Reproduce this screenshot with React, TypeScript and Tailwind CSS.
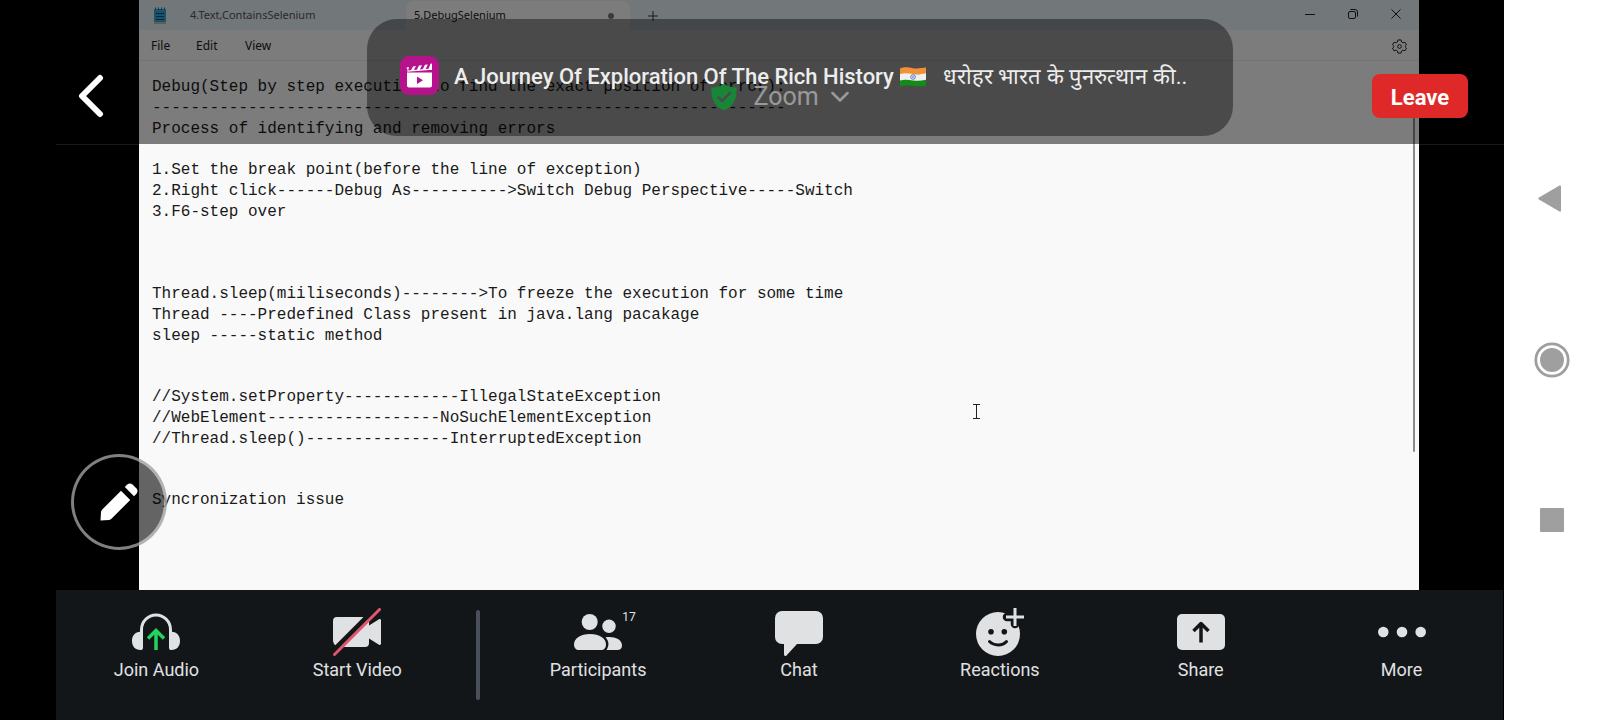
import type { ReactNode } from "react";

const noteBlocks: { gap: string; lines: string[] }[] = [
  {
    gap: "",
    lines: [
      "Debug(Step by step execution to find the exact position of error):",
      "------------------------------------------------------------------",
      "Process of identifying and removing errors",
    ],
  },
  {
    gap: "mt-5",
    lines: [
      "1.Set the break point(before the line of exception)",
      "2.Right click------Debug As---------->Switch Debug Perspective-----Switch",
      "3.F6-step over",
    ],
  },
  {
    gap: "mt-[61px]",
    lines: [
      "Thread.sleep(miiliseconds)-------->To freeze the execution for some time",
      "Thread ----Predefined Class present in java.lang pacakage",
      "sleep -----static method",
    ],
  },
  {
    gap: "mt-10",
    lines: [
      "//System.setProperty------------IllegalStateException",
      "//WebElement------------------NoSuchElementException",
      "//Thread.sleep()---------------InterruptedException",
    ],
  },
  { gap: "mt-10", lines: ["Syncronization issue"] },
];

function NotepadWindow() {
  return (
    <section
      aria-label="Shared screen"
      className="relative flex min-w-0 flex-1 flex-col bg-[#f9f9f9] text-[#1a1a1a]"
    >
      <div className="flex h-[30px] items-stretch bg-[#e4eef4] pt-px font-['Noto_Sans'] text-[11px]">
        <div className="flex w-[50px] items-center pl-[15px]">
          <svg width="12" height="18" viewBox="0 0 12 18" aria-hidden="true">
            <rect x="0" y="2" width="12" height="15" rx="1" fill="#3aa6d0" />
            <rect x="0" y="15" width="12" height="2" fill="#c9b8a8" />
            <path d="M1.5 0.5v2.5M4.5 0.5v2.5M7.5 0.5v2.5M10.5 0.5v2.5" stroke="#1d6d92" />
            <path d="M2 6.5h8M2 9.5h8M2 12.5h8" stroke="#0d4a75" />
          </svg>
        </div>
        <button type="button" className="w-[217px] truncate pl-px text-left text-[#555]">
          4.Text,ContainsSelenium
        </button>
        <div className="flex w-[224px] items-center justify-between rounded-t-lg bg-[#f9f9fb] pr-4 pl-2">
          <button type="button" className="truncate text-left">
            5.DebugSelenium
          </button>
          <span className="size-1.5 rounded-full bg-[#777]" />
        </div>
        <button type="button" aria-label="New tab" className="flex w-[45px] items-center justify-center">
          <svg width="10" height="10" viewBox="0 0 10 10" aria-hidden="true">
            <path d="M5 0v10M0 5h10" stroke="#333" />
          </svg>
        </button>
        <div className="ml-auto flex items-center gap-[33px] pr-[18px] pb-1">
          <button type="button" aria-label="Minimize">
            <svg width="10" height="10" viewBox="0 0 10 10" aria-hidden="true">
              <path d="M0 5.5h10" stroke="#222" />
            </svg>
          </button>
          <button type="button" aria-label="Restore">
            <svg width="10" height="10" viewBox="0 0 10 10" fill="none" stroke="#222" aria-hidden="true">
              <rect x="0.5" y="2.5" width="7" height="7" rx="1.5" />
              <path d="M2.5 0.5h4.5a2.5 2.5 0 0 1 2.5 2.5v4.5" />
            </svg>
          </button>
          <button type="button" aria-label="Close">
            <svg width="10" height="10" viewBox="0 0 10 10" aria-hidden="true">
              <path d="M0.5 0.5l9 9M9.5 0.5l-9 9" stroke="#222" />
            </svg>
          </button>
        </div>
      </div>

      <div className="flex h-[31px] items-center border-b border-[#e8e8e8] bg-[#f9f9fb] px-3 pt-0.5 font-['Noto_Sans'] text-xs">
        <button type="button" className="w-[45px] text-left">File</button>
        <button type="button" className="w-[49px] text-left">Edit</button>
        <button type="button" className="text-left">View</button>
        <button type="button" aria-label="Settings" className="ml-auto">
          <svg width="15" height="15" viewBox="0 0 24 24" fill="none" stroke="#222" strokeWidth="1.6" strokeLinejoin="round" aria-hidden="true">
            <path d="M9.5 1.5h5l.8 3.4 2 1.2 3.4-1 2.5 4.3-2.5 2.4v.4l2.5 2.4-2.5 4.3-3.4-1-2 1.2-.8 3.4h-5l-.8-3.4-2-1.2-3.4 1L.8 14.6l2.5-2.4v-.4L.8 9.4l2.5-4.3 3.4 1 2-1.2z" />
            <circle cx="12" cy="12" r="3" />
          </svg>
        </button>
      </div>

      <div className="pt-4 pb-4 pl-[13px] font-['Liberation_Mono',monospace] text-base leading-[21px] whitespace-pre">
        {noteBlocks.map((block) => (
          <div key={block.lines[0]} className={block.gap}>
            {block.lines.map((line) => (
              <p key={line}>{line}</p>
            ))}
          </div>
        ))}
      </div>

      <div className="absolute top-[118px] right-1 h-[334px] w-0.5 rounded-full bg-[#8a8a8a]" />
      <svg className="absolute top-[404px] left-[834px]" width="7" height="15" viewBox="0 0 7 15" fill="none" stroke="#222" aria-hidden="true">
        <path d="M0 0.5h7M0 14.5h7M3.5 1v13" />
      </svg>
    </section>
  );
}

function MeetingHeader() {
  return (
    <header className="absolute top-0 right-0 left-14 grid h-[145px] grid-cols-[1fr_auto_1fr] items-center border-b border-white/10 bg-black/50 bg-clip-padding pt-12 font-['Roboto']">
      <div className="flex pl-[22px]">
        <button type="button" aria-label="Back">
          <svg width="26" height="44" viewBox="0 0 26 44" fill="none" stroke="#fff" strokeWidth="6" strokeLinecap="round" strokeLinejoin="round" aria-hidden="true">
            <path d="M22 4L4 22l18 18" />
          </svg>
        </button>
      </div>
      <button type="button" className="flex items-center pt-0.5 text-[25px] leading-8 text-white">
        <svg width="26" height="28" viewBox="0 0 26 28" aria-hidden="true">
          <path
            fillRule="evenodd"
            fill="#2be05c"
            d="M13 0.5C16 3 20.5 4.5 25.5 4.8C26 14 24 23 13 27.5C2 23 0 14 0.5 4.8C5.5 4.5 10 3 13 0.5ZM6 14.5L11 19.8L20.5 10.2L18.8 8.5L11 16.3L7.7 12.8Z"
          />
        </svg>
        <span className="pr-3 pl-4">Zoom</span>
        <svg width="18" height="12" viewBox="0 0 18 12" fill="none" stroke="#fff" strokeWidth="2.5" strokeLinecap="round" strokeLinejoin="round" aria-hidden="true">
          <path d="M1.5 2L9 9.5L16.5 2" />
        </svg>
      </button>
      <div className="flex justify-end pr-9">
        <button type="button" className="h-11 w-24 rounded-lg bg-[#df2828] pt-0.5 text-[22px] font-bold text-white">
          Leave
        </button>
      </div>
    </header>
  );
}

function NotificationBanner() {
  return (
    <aside
      aria-label="Notification"
      className="absolute inset-x-0 top-[19px] mx-auto flex h-[117px] w-[866px] max-w-full items-start rounded-[30px] bg-black/40 pt-[37px] pl-[33px] font-['Roboto']"
    >
      <svg className="shrink-0" width="39" height="39" viewBox="0 0 39 39" aria-hidden="true">
        <rect width="39" height="39" rx="9" fill="#b5128c" />
        <path d="M7 16.5h25v13a2 2 0 0 1-2 2H9a2 2 0 0 1-2-2z" fill="#fff" />
        <path d="M7.3 15.2L32 13.2" stroke="#fff" strokeWidth="1.3" />
        <path d="M6.5 11.5L9 11l-1 4zM13 10.5l3-.4-2.5 4.7-3 .2zM19 9.6l3-.4-2.5 5-3 .2zM25 8.8l2.8-.4-2.5 5.3-3 .2zM30.5 7.8L32 7.5v6l-3.8.2z" fill="#fff" />
        <path d="M17 20.5v7.5l6-3.8z" fill="#b5128c" />
      </svg>
      <p className="flex h-[41px] items-center pl-[15px] text-[22px] whitespace-nowrap text-[#ededed]">
        <span className="font-medium">A Journey Of Exploration Of The Rich History</span>
        <svg className="ml-1.5" width="26" height="20" viewBox="0 0 26 20" role="img" aria-label="India">
          <path d="M0 1.5C5-.5 8 .5 13 1.2S22 1 26 0.5V7H0z" fill="#f29134" />
          <path d="M0 7C5 5.5 9 6.5 13 7s8 .3 13-.8V14H0z" fill="#f0f0f0" />
          <path d="M0 13.5C5 12 9 13 13 13.4s8 .4 13-.6V18.5C21 19.6 17 19.4 13 19S5 18.2 0 19.5z" fill="#138a1a" />
          <circle cx="13" cy="10" r="2.3" fill="none" stroke="#4657b5" strokeWidth="0.8" />
          <circle cx="13" cy="10" r="0.8" fill="#4657b5" />
        </svg>
        <span lang="hi" className="ml-[17px]">धरोहर भारत के पुनरुत्थान की..</span>
      </p>
    </aside>
  );
}

function ToolbarItem({ label, badge, children }: { label: string; badge?: string; children: ReactNode }) {
  return (
    <button type="button" className="flex min-w-0 flex-1 flex-col items-center gap-0.5">
      <span className="relative">
        <svg width="48" height="48" viewBox="0 0 48 48" fill="#e0e1e3" aria-hidden="true">
          {children}
        </svg>
        {badge && <span className="absolute top-0 left-full text-xs leading-[18px]">{badge}</span>}
      </span>
      <span>{label}</span>
    </button>
  );
}

function MeetingToolbar() {
  return (
    <footer className="mr-px ml-14 flex h-[130px] items-start bg-[#131619] pt-[18px] pr-px font-['Roboto'] text-lg leading-6 text-[#e0e1e3]">
      <ToolbarItem label="Join Audio">
        <path d="M9.5 25V21.5a14.5 14.5 0 0 1 29 0V25" fill="none" stroke="#e0e1e3" strokeWidth="3" />
        <path d="M11 24.5V39.5C11 41.5 10 42 8.5 42C3 42 0 38 0 33C0 27.5 3 24 8.5 23.7H11zM37 24.5V39.5C37 41.5 38 42 39.5 42C45 42 48 38 48 33C48 27.5 45 24 39.5 23.7H37z" />
        <path d="M24 42V23.5M16 30.5l8-8 8 8" fill="none" stroke="#23d35c" strokeWidth="3.5" />
      </ToolbarItem>
      <ToolbarItem label="Start Video">
        <path d="M4 9H32a4 4 0 0 1 4 4V35a4 4 0 0 1-4 4H7C3 39 0 36 0 32V13a4 4 0 0 1 4-4zM36 17.5L46 11.3Q48 10.5 48 12.5V35.5Q48 37.5 46 36.8L36 30.5z" />
        <path d="M-1 44L45 -2" stroke="#131619" strokeWidth="5" />
        <path d="M1.5 46.5L46.5 1.5" stroke="#e0566e" strokeWidth="3" strokeLinecap="round" />
      </ToolbarItem>
      <div className="flex w-10 shrink-0 justify-center pt-0.5">
        <div className="h-[90px] w-1 rounded-sm bg-[#4a5059]" />
      </div>
      <ToolbarItem label="Participants" badge="17">
        <circle cx="15.7" cy="14" r="8" />
        <circle cx="35" cy="18.3" r="6.7" />
        <path d="M5 42C2 42 0 40 0 36.5C0 30.5 6.5 26 16 26C25.5 26 32 30.5 32 36.5C32 40 30 42 27 42z" />
        <path d="M32.5 42C35.5 37.5 35 33 31.5 29.3C39 28 48 30.5 48 37.5C48 40.5 46 42 43.5 42z" />
      </ToolbarItem>
      <ToolbarItem label="Chat">
        <path d="M7 3H41a7 7 0 0 1 7 7V29a7 7 0 0 1-7 7H22L11.5 47.5Q9 49 9 46V36H7a7 7 0 0 1-7-7V10a7 7 0 0 1 7-7z" />
      </ToolbarItem>
      <ToolbarItem label="Reactions">
        <circle cx="22" cy="26" r="22" />
        <circle cx="15" cy="23.7" r="2.8" fill="#131619" />
        <circle cx="28.3" cy="23.7" r="2.8" fill="#131619" />
        <path d="M13.5 33.5C18 38 26.5 38 30.5 33.5" fill="none" stroke="#131619" strokeWidth="3" strokeLinecap="round" />
        <path d="M39 0V16M31 9H48" stroke="#131619" strokeWidth="8.5" strokeLinecap="round" />
        <path d="M39 0V18M30 9H48" stroke="#e0e1e3" strokeWidth="3" />
      </ToolbarItem>
      <ToolbarItem label="Share">
        <rect y="6" width="48" height="36" rx="5" />
        <path d="M24 34.5V16M16.5 23l7.5-7.5 7.5 7.5" fill="none" stroke="#131619" strokeWidth="3.5" strokeLinejoin="round" />
      </ToolbarItem>
      <ToolbarItem label="More">
        <circle cx="5.3" cy="24" r="5.3" />
        <circle cx="24" cy="24" r="5.3" />
        <circle cx="42.7" cy="24" r="5.3" />
      </ToolbarItem>
    </footer>
  );
}

function SystemNavigation() {
  return (
    <nav aria-label="System" className="flex w-24 shrink-0 flex-col items-center justify-center gap-30 bg-white">
      <button type="button" aria-label="Back">
        <svg className="block" width="40" height="40" viewBox="0 0 40 40" fill="#9f9f9f" aria-hidden="true">
          <path d="M27.5 5.5Q29 5 29 6.5V30.5Q29 32 27.5 31.5L7 19.5Q5.5 18.5 7 17.5z" />
        </svg>
      </button>
      <button type="button" aria-label="Home">
        <svg className="block" width="40" height="40" viewBox="0 0 40 40" aria-hidden="true">
          <circle cx="20" cy="20" r="16.2" fill="none" stroke="#9f9f9f" strokeWidth="2.8" />
          <circle cx="20" cy="20" r="12" fill="#9f9f9f" />
        </svg>
      </button>
      <button type="button" aria-label="Recent apps">
        <svg className="block" width="40" height="40" viewBox="0 0 40 40" fill="#9f9f9f" aria-hidden="true">
          <rect x="8" y="8" width="24" height="24" rx="1" />
        </svg>
      </button>
    </nav>
  );
}

export default function App() {
  return (
    <div className="relative flex min-h-screen">
      <main className="flex min-w-0 flex-1 flex-col bg-black">
        <div className="relative flex flex-1 pr-[85px] pl-[139px]">
          <NotepadWindow />
          <MeetingHeader />
          <button
            type="button"
            aria-label="Annotate"
            className="absolute bottom-10 left-[71px] flex size-24 items-center justify-center rounded-full border-3 border-white/50 bg-black/60"
          >
            <svg width="38" height="38" viewBox="0 0 38 38" fill="#fff" aria-hidden="true">
              <path d="M0.5 37.5L1 29Q1.3 27.5 2.5 26.3L21 7.8L30.2 17L11.7 35.5Q10.5 36.7 9 37z" />
              <path d="M24.8 4L27.3 1.5Q30 -0.5 32.5 1.5L36.5 5.5Q38.5 8 36.5 10.7L34 13.2z" />
            </svg>
          </button>
        </div>
        <MeetingToolbar />
      </main>
      <SystemNavigation />
      <NotificationBanner />
    </div>
  );
}
